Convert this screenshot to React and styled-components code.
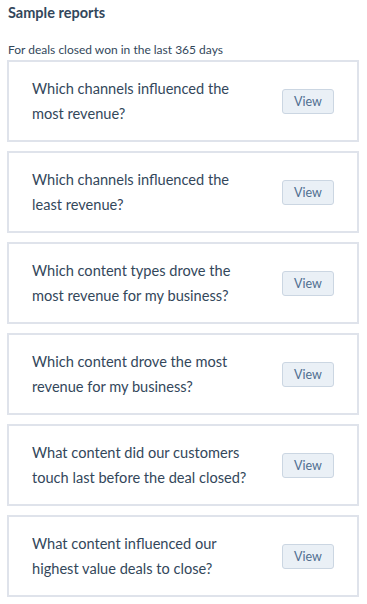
import React from "react";
import styled, { createGlobalStyle } from "styled-components";

const Global = createGlobalStyle`
  html, body { margin: 0; padding: 0; background: #fff; }
  body { font-family: Lato, "Open Sans", sans-serif; -webkit-font-smoothing: antialiased; }
`;

const Page = styled.div`
  padding: 0 8px 0 7px;
  width: 367px;
  box-sizing: border-box;
`;

const Title = styled.h2`
  margin: 0;
  padding: 4px 0 0 1px;
  font-size: 14.5px;
  line-height: 18px;
  font-weight: 700;
  color: #33475b;
`;

const Subtitle = styled.p`
  margin: 0;
  padding: 20px 0 0 1px;
  font-size: 12px;
  line-height: 16px;
  color: #33475b;
`;

const List = styled.div`
  display: flex;
  flex-direction: column;
  gap: 9px;
  margin-top: 2px;
`;

const Card = styled.div`
  box-sizing: border-box;
  height: 82px;
  border: 2px solid #dfe3eb;
  display: flex;
  align-items: center;
  justify-content: space-between;
  padding: 0 23px 0 23px;
  background: #fff;
`;

const Question = styled.div`
  font-size: 14.6px;
  line-height: 25px;
  color: #33475b;
  max-width: 230px;
`;

const ViewButton = styled.button`
  box-sizing: border-box;
  width: 52px;
  height: 25px;
  border: 1px solid #cbd6e2;
  border-radius: 3px;
  background: #eaf0f6;
  color: #506e91;
  font-family: inherit;
  font-size: 12.5px;
  padding: 0;
  cursor: pointer;
`;

const reports = [
  ["Which channels influenced the", "most revenue?"],
  ["Which channels influenced the", "least revenue?"],
  ["Which content types drove the", "most revenue for my business?"],
  ["Which content drove the most", "revenue for my business?"],
  ["What content did our customers", "touch last before the deal closed?"],
  ["What content influenced our", "highest value deals to close?"],
];

export default function App() {
  return (
    <>
      <Global />
      <Page>
        <Title>Sample reports</Title>
        <Subtitle>For deals closed won in the last 365 days</Subtitle>
        <List>
          {reports.map(([a, b], i) => (
            <Card key={i}>
              <Question>
                {a}
                <br />
                {b}
              </Question>
              <ViewButton>View</ViewButton>
            </Card>
          ))}
        </List>
      </Page>
    </>
  );
}
